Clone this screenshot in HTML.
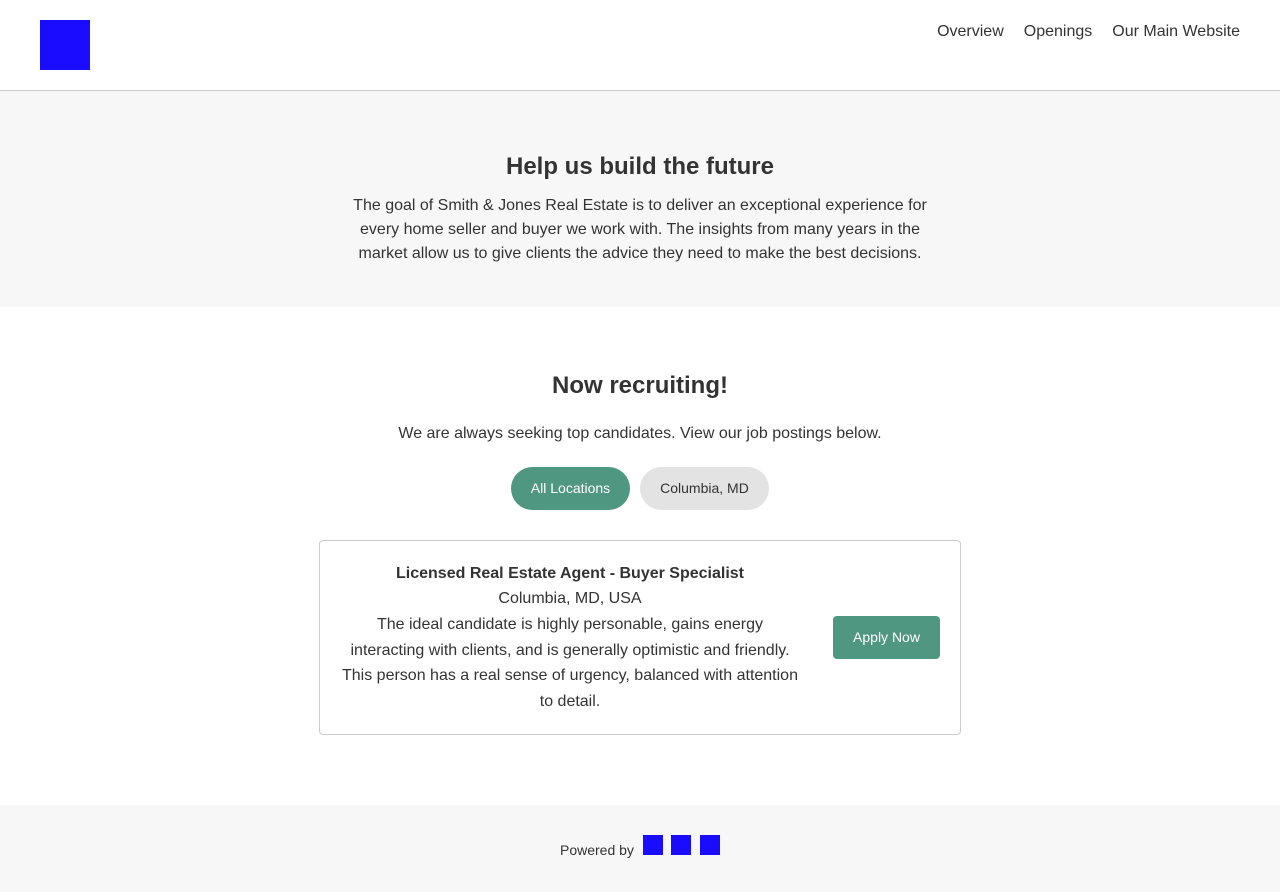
<!DOCTYPE html>
<html><head><style>
*{margin:0;padding:0;box-sizing:border-box}
body{width:1280px;height:892px;font-family:"Liberation Sans",Arial,sans-serif;color:#333;background:#fff;position:relative;overflow:hidden}
.abs{position:absolute}
.logo{left:40px;top:20px;width:50px;height:50px;background:#1a0dff}
.nav{top:23px;right:40px;font-size:16px;display:flex;gap:20px}
.hero{top:90px;left:0;width:1280px;height:217px;background:#f7f7f7;border-top:1px solid #ccc;text-align:center}
.hero h1{font-size:24px;margin-top:61px;line-height:30px}
.hero p{width:600px;margin:12px auto 0;font-size:16px;line-height:24px}
.c{text-align:center;width:1280px;left:0}
.pill{position:absolute;top:467px;height:43px;border-radius:22px;font-size:14px;line-height:43px;text-align:center}
.card{left:319px;top:540px;width:642px;height:195px;border:1px solid #ccc;border-radius:4px}
.btn{left:833px;top:616px;width:107px;height:43px;background:#4f9780;color:#fff;border-radius:4px;font-size:14px;line-height:43px;text-align:center}
.foot{left:0;top:805px;width:1280px;height:87px;background:#f7f7f7}
.sq{position:absolute;top:835px;width:20px;height:20px;background:#1a0dff}
</style></head><body>
<div class="abs logo"></div>
<div class="abs nav"><span>Overview</span><span>Openings</span><span>Our Main Website</span></div>
<div class="abs hero"><h1>Help us build the future</h1><p>The goal of Smith &amp; Jones Real Estate is to deliver an exceptional experience for every home seller and buyer we work with. The insights from many years in the market allow us to give clients the advice they need to make the best decisions.</p></div>
<div class="abs c" style="top:371px;font-size:24px;font-weight:bold;line-height:30px">Now recruiting!</div>
<div class="abs c" style="top:424px;font-size:16px;line-height:20px">We are always seeking top candidates. View our job postings below.</div>
<div class="pill" style="left:511px;width:119px;background:#4f9780;color:#fff">All Locations</div>
<div class="pill" style="left:640px;width:129px;background:#e3e3e3;color:#333">Columbia, MD</div>
<div class="abs card"></div>
<div class="abs" style="left:340px;top:562px;width:460px;text-align:center;font-size:16px;line-height:25.7px">
<div style="font-weight:bold;line-height:23px">Licensed Real Estate Agent - Buyer Specialist</div>
<div style="line-height:27px">Columbia, MD, USA</div>
<div>The ideal candidate is highly personable, gains energy interacting with clients, and is generally optimistic and friendly. This person has a real sense of urgency, balanced with attention to detail.</div>
</div>
<div class="abs btn">Apply Now</div>
<div class="abs foot"></div>
<div class="abs" style="left:560px;top:842px;font-size:14px">Powered by</div>
<div class="sq" style="left:643px"></div><div class="sq" style="left:671px"></div><div class="sq" style="left:700px"></div>
</body></html>
